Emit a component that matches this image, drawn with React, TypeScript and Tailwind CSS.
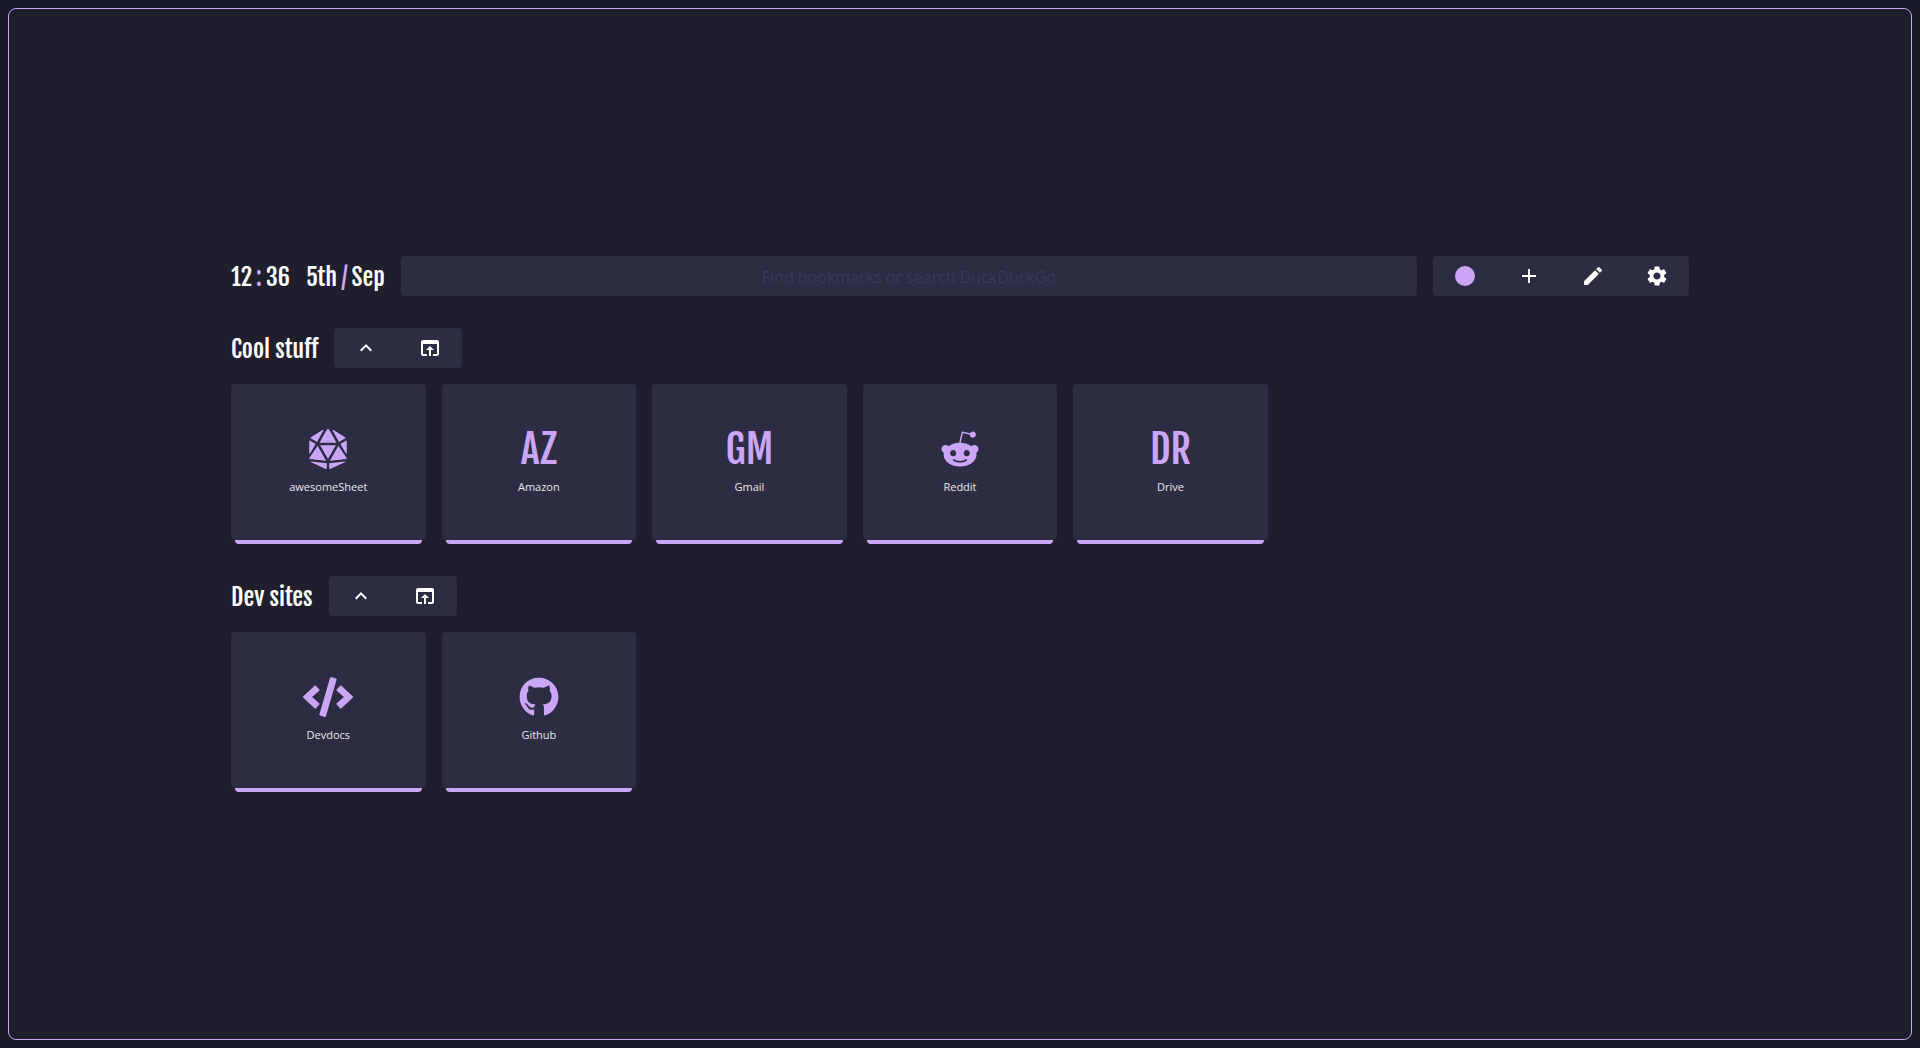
import { FaCode, FaDiceD20, FaGithub, FaRedditAlien } from "react-icons/fa";
import { MdAdd, MdEdit, MdExpandLess, MdOpenInBrowser, MdSettings } from "react-icons/md";
import type { ReactNode } from "react";

const display = "font-['Fjalla_One','Oswald','Roboto_Condensed',sans-serif] font-normal";

type Bookmark = { name: string; visual: ReactNode };

const groups: { name: string; items: Bookmark[] }[] = [
  {
    name: "Cool stuff",
    items: [
      { name: "awesomeSheet", visual: <FaDiceD20 size={40} /> },
      { name: "Amazon", visual: "AZ" },
      { name: "Gmail", visual: "GM" },
      { name: "Reddit", visual: <FaRedditAlien size={40} /> },
      { name: "Drive", visual: "DR" },
    ],
  },
  {
    name: "Dev sites",
    items: [
      { name: "Devdocs", visual: <FaCode size={50} /> },
      { name: "Github", visual: <FaGithub size={40} /> },
    ],
  },
];

function ToolButton({ label, children }: { label: string; children: ReactNode }) {
  return (
    <button type="button" aria-label={label} className="flex h-10 w-16 items-center justify-center text-white">
      {children}
    </button>
  );
}

function Toolbar({ children }: { children: ReactNode }) {
  return <div className="flex shrink-0 rounded bg-[#2c2c43]">{children}</div>;
}

function Card({ name, visual }: Bookmark) {
  return (
    <a href="#" className="flex h-40 flex-col">
      <span className="flex flex-1 flex-col items-center justify-center rounded bg-[#2c2c43] pb-1">
        <span className={`flex h-12 items-center text-[40px] leading-none text-[#cba6f7] ${display}`}>{visual}</span>
        <span className="mt-1.5 text-[11px] leading-4 text-[#e8e8f0]">{name}</span>
      </span>
      <span className="mx-1 h-1 rounded-b bg-[#cba6f7]" />
    </a>
  );
}

export default function App() {
  return (
    <div className="flex min-h-screen bg-[#181926] p-2 font-['Open_Sans',sans-serif]">
      <main className="flex flex-1 flex-col justify-center gap-8 rounded-lg border border-[#cba6f7] bg-[#1f1e2d] px-[222px]">
        <header className="flex items-center gap-4">
          <div className={`flex h-10 shrink-0 gap-4 text-[24px] leading-[42px] text-white ${display}`}>
            <time className="flex gap-1">
              12<span className="text-[#cba6f7]">:</span>36
            </time>
            <time className="flex gap-1">
              5th<span className="text-[#cba6f7]">/</span>Sep
            </time>
          </div>
          <input
            type="text"
            aria-label="Search"
            placeholder="Find bookmarks or search DuckDuckGo"
            className="h-10 min-w-0 flex-1 rounded bg-[#2c2c43] pt-0.5 text-center text-base text-white outline-none placeholder:text-[#3a3957]"
          />
          <Toolbar>
            <ToolButton label="Accent colour">
              <span className="size-5 rounded-full bg-[#cba6f7]" />
            </ToolButton>
            <ToolButton label="Add">
              <MdAdd size={24} />
            </ToolButton>
            <ToolButton label="Edit">
              <MdEdit size={24} />
            </ToolButton>
            <ToolButton label="Settings">
              <MdSettings size={24} />
            </ToolButton>
          </Toolbar>
        </header>
        {groups.map((group) => (
          <section key={group.name} className="flex flex-col gap-4">
            <div className="flex items-center gap-4">
              <h2 className={`h-10 text-[24px] leading-[42px] text-white ${display}`}>{group.name}</h2>
              <Toolbar>
                <ToolButton label={`Collapse ${group.name}`}>
                  <MdExpandLess size={24} />
                </ToolButton>
                <ToolButton label={`Open all in ${group.name}`}>
                  <MdOpenInBrowser size={24} />
                </ToolButton>
              </Toolbar>
            </div>
            <div className="grid grid-cols-7 gap-4">
              {group.items.map((item) => (
                <Card key={item.name} {...item} />
              ))}
            </div>
          </section>
        ))}
      </main>
    </div>
  );
}
